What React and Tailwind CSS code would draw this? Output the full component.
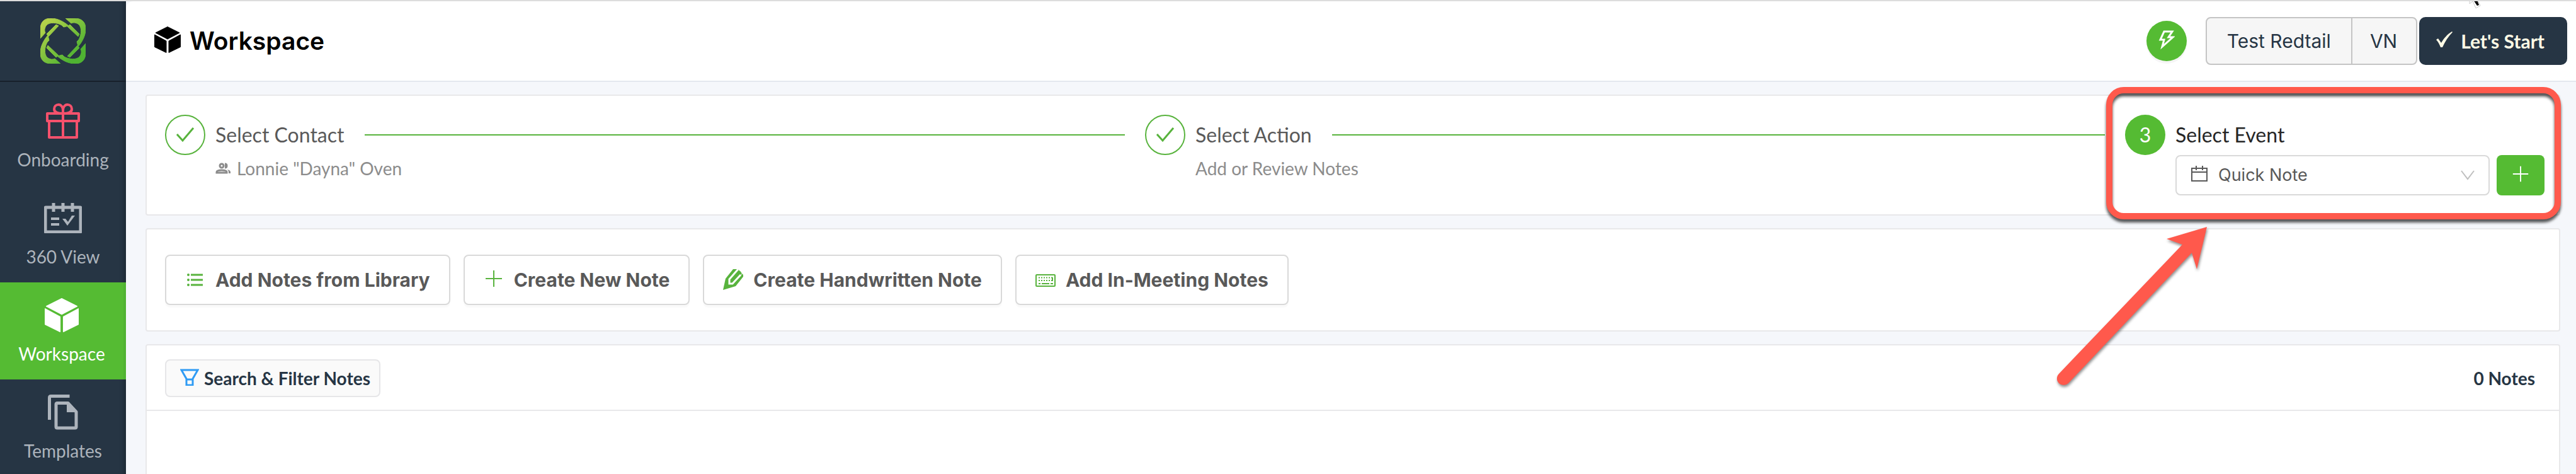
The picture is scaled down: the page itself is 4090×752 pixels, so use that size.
import React from "react";

const navItems = [
  { label: "Onboarding", icon: <GiftIcon /> },
  { label: "360 View", icon: <CalendarCheckIcon /> },
  { label: "Workspace", icon: <CubeIcon className="size-[54px]" />, active: true },
  { label: "Templates", icon: <CopyIcon /> },
];

const noteActions = [
  { label: "Add Notes from Library", icon: <ListIcon /> },
  { label: "Create New Note", icon: <PlusIcon className="size-8 -translate-y-0.5 text-[#58b33d]" /> },
  { label: "Create Handwritten Note", icon: <PencilIcon /> },
  { label: "Add In-Meeting Notes", icon: <KeyboardIcon /> },
];

function LogoIcon() {
  const arm = (
    <>
      <path d="M0 32V18C0 6 6 0 17 0c10 0 20 5 28 12l-8 2-3-3C27 7 14 5 9 12c-2 4-3 7-1 11z" />
      <path d="M43 13l4-3 15 15-2 4z" />
    </>
  );
  return (
    <svg viewBox="0 0 72 72" className="size-[72px]" aria-hidden="true">
      <defs>
        <linearGradient id="logo-fill" x1="0" y1="0" x2="1" y2="1">
          <stop offset="0.1" stopColor="#b4d24a" />
          <stop offset="0.8" stopColor="#4fb332" />
        </linearGradient>
        <mask id="logo-arms">
          <g fill="#fff" stroke="#fff" strokeWidth="1">
            <g>{arm}</g>
            <g transform="rotate(90 36 36)">{arm}</g>
            <g transform="rotate(180 36 36)">{arm}</g>
            <g transform="rotate(270 36 36)">{arm}</g>
          </g>
        </mask>
      </defs>
      <rect width="72" height="72" fill="url(#logo-fill)" mask="url(#logo-arms)" />
    </svg>
  );
}

function GiftIcon() {
  return (
    <svg viewBox="0 0 54 56" className="h-14 w-[54px] text-[#f5516c]" fill="none" stroke="currentColor" strokeWidth="4" strokeLinejoin="round" aria-hidden="true">
      <path d="M2 16h50v12H2zM5 28h44v26H5zM27 16v38" />
      <path d="M27 16c-8 0-14-1-14-7 0-4 3-7 7-7s7 4 7 9zM27 16c8 0 14-1 14-7 0-4-3-7-7-7s-7 4-7 9z" />
    </svg>
  );
}

function CalendarCheckIcon() {
  return (
    <svg viewBox="0 0 60 48" className="h-12 w-[60px]" fill="none" stroke="currentColor" strokeWidth="4" aria-hidden="true">
      <rect x="2" y="7" width="56" height="39" rx="1" strokeWidth="5" />
      <path d="M15 0v14M30 0v14M45 0v14" strokeWidth="5" />
      <path d="M11 25h13M11 34h13" />
      <path d="M29 25h5l4 5 6-10h5L37 36z" fill="currentColor" stroke="none" />
    </svg>
  );
}

function CubeIcon({ className }) {
  return (
    <svg viewBox="0 0 42 42" className={className} fill="currentColor" stroke="currentColor" strokeWidth="1" strokeLinejoin="round" aria-hidden="true">
      <path d="M21 .5L40 10 21 20 2 10z" />
      <path d="M.5 13L19 23v18.500L.5 32.500z" />
      <path d="M41.500 13L23 23v18.500l18.500-9z" />
    </svg>
  );
}

function CopyIcon() {
  return (
    <svg viewBox="0 0 48 56" className="h-14 w-12" fill="none" stroke="currentColor" strokeWidth="5" strokeLinejoin="round" aria-hidden="true">
      <path d="M2.500 40V5q0-2.500 2.500-2.500h29.500" />
      <path d="M15 13.500h17l13 14V51q0 2-2 2H15q-2 0-2-2V15.500q0-2 2-2z" />
      <path d="M30 13v15h15z" fill="currentColor" stroke="none" />
    </svg>
  );
}

function ListIcon() {
  return (
    <svg viewBox="0 0 32 32" className="size-8 text-[#58b33d]" fill="none" stroke="currentColor" strokeWidth="3" aria-hidden="true">
      <path d="M9 8h19M9 16h19M9 24h19" />
      <path d="M5 8h0M5 16h0M5 24h0" strokeWidth="4" strokeLinecap="round" />
    </svg>
  );
}

function PlusIcon({ className }) {
  return (
    <svg viewBox="0 0 32 32" className={className} fill="none" stroke="currentColor" strokeWidth="2" aria-hidden="true">
      <path d="M16 3v26M3 16h26" />
    </svg>
  );
}

function PencilIcon() {
  return (
    <svg viewBox="0 0 32 34" className="h-[34px] w-8" fill="none" strokeWidth="3" aria-hidden="true">
      <path d="M16 0h8l8 9v3L20 27 0 33l4-18z" fill="#58b33d" />
      <path d="M24 0L10 16v7h5L28 9" stroke="#fff" />
      <path d="M28 4L15 18" stroke="#58b33d" strokeWidth="2" />
      <path d="M32 5L17 22" stroke="#fff" strokeWidth="1" />
    </svg>
  );
}

function KeyboardIcon() {
  return (
    <svg viewBox="0 0 32 32" className="size-8 text-[#58b33d]" fill="none" stroke="currentColor" strokeWidth="2" aria-hidden="true">
      <rect x="1" y="8" width="30" height="18" rx="1" />
      <path d="M5 12.500h22M5 17h22" strokeDasharray="2 2" />
      <path d="M5 22h3M10 22h12M24 22h4M27 12v6" />
    </svg>
  );
}

function CheckIcon() {
  return (
    <svg viewBox="0 0 32 32" className="size-8" fill="none" stroke="currentColor" strokeWidth="3" aria-hidden="true">
      <path d="M3 15l9 10L29 5" />
    </svg>
  );
}

function Step({ title, children }) {
  return (
    <li className="flex min-w-0 flex-1 gap-4">
      <span className="flex size-16 shrink-0 items-center justify-center rounded-full border-2 border-[#58b33d] text-[#58b33d]">
        <CheckIcon />
      </span>
      <div className="min-w-0 flex-1">
        <div className="flex items-center gap-8">
          <h2 className="text-[32px] leading-[64px] whitespace-nowrap text-[#595959]">{title}</h2>
          <span className="h-0.5 flex-1 bg-[#58b33d]" />
        </div>
        <p className="flex items-center gap-2 text-[28px] leading-[42px] text-[#8c8c8c]">{children}</p>
      </div>
    </li>
  );
}

function Sidebar() {
  return (
    <aside className="w-[200px] shrink-0 bg-[#263544] shadow-[inset_-8px_0_8px_-6px_rgba(0,0,0,0.3)]">
      <a href="#home" aria-label="Home" className="flex h-32 items-center justify-center border-b-2 border-[#17202b]">
        <LogoIcon />
      </a>
      <nav className="pt-2.5">
        {navItems.map((item) => (
          <a
            key={item.label}
            href={"#" + item.label}
            className={
              item.active
                ? "flex flex-col items-center gap-3 border-r-4 border-[#50b332] bg-[#55bb33] pt-5 pb-6 text-white"
                : "flex flex-col items-center gap-3 pt-5 pb-6 text-[#adb4bc]"
            }
          >
            <span className="flex h-16 items-center">{item.icon}</span>
            <span className="text-[28px] leading-[34px]">{item.label}</span>
          </a>
        ))}
      </nav>
    </aside>
  );
}

function Header() {
  return (
    <header className="flex h-32 shrink-0 items-center justify-between rounded-tl-xl border-b-2 border-[#e4e8ef] bg-white pr-3.5 pl-[45px]">
      <h1 className="flex items-center gap-3.5 font-['Inter',sans-serif] text-[39px] font-semibold text-black">
        <CubeIcon className="size-[42px] -translate-y-0.5" />
        Workspace
      </h1>
      <div className="flex items-center font-['Inter',sans-serif] text-[30px] text-[#263544]">
        <button aria-label="Quick actions" className="mr-[30px] flex size-16 items-center justify-center rounded-full bg-[#55bb33] text-white shadow-[0_4px_0_rgba(0,0,0,0.04)]">
          <svg viewBox="0 0 26 32" className="h-8 w-[26px] -translate-y-0.5" fill="none" stroke="currentColor" strokeWidth="3" aria-hidden="true">
            <path d="M9 3h13l-6 9h7L6 27l3-11H3z" />
          </svg>
        </button>
        <div className="mr-[3px] flex h-[76px] rounded-lg border-2 border-[#c4c4c4] bg-[#f6f6f6]">
          <button className="border-r-2 border-[#c4c4c4] px-8">Test Redtail</button>
          <button className="pr-[30px] pl-7">VN</button>
        </div>
        <button className="flex h-[76px] items-center gap-3 rounded-[10px] bg-[#263544] pr-9 pl-[26px] font-['Lato',sans-serif] font-bold text-[#fffbe6]">
          <svg viewBox="0 0 28 28" className="size-7 -translate-y-0.5" fill="currentColor" aria-hidden="true">
            <path d="M1 14l3-2 5 7C13 12 19 5 26 1l1 1C20 9 15 17 11 26H8C6 21 4 17 1 14z" />
          </svg>
          Let's Start
        </button>
      </div>
    </header>
  );
}

function SelectEventStep() {
  return (
    <li className="relative flex w-[666px] shrink-0 gap-4">
      <span className="flex size-16 shrink-0 items-center justify-center rounded-full bg-[#55bb33] text-[32px] text-white">3</span>
      <div className="flex-1">
        <label htmlFor="event" className="block text-[32px] leading-[64px] text-[#262626]">
          Select Event
        </label>
        <div className="flex gap-[11px]">
          <div className="relative flex-1">
            <select id="event" className="h-16 w-full appearance-none rounded-lg border-2 border-[#d9d9d9] bg-white pl-[66px] font-['Inter',sans-serif] text-[27px] text-[#595959]">
              <option>Quick Note</option>
            </select>
            <svg viewBox="0 0 26 26" className="pointer-events-none absolute top-[17px] left-[25px] size-[26px] text-[#595959]" fill="none" stroke="currentColor" strokeWidth="2" aria-hidden="true">
              <path d="M1 4h24v20H1zM1 10h24M8 0v7M18 0v7" />
            </svg>
            <svg viewBox="0 0 22 16" className="pointer-events-none absolute top-6 right-6 h-4 w-[22px] text-[#bfbfbf]" fill="none" stroke="currentColor" strokeWidth="2" aria-hidden="true">
              <path d="M1 1l10 13L21 1" />
            </svg>
          </div>
          <button aria-label="Add event" className="flex h-16 w-[76px] items-center justify-center rounded-lg bg-[#55bb33] text-white">
            <PlusIcon className="size-[30px] -translate-y-0.5" />
          </button>
        </div>
      </div>
      <div className="pointer-events-none absolute -top-11 -right-[26px] -bottom-[38px] -left-[30px] rounded-[28px] border-10 border-[#ff594c] drop-shadow-[0_5px_2px_rgba(0,0,0,0.65)]" />
      <svg viewBox="0 0 250 270" className="pointer-events-none absolute top-[168px] -left-[109px] h-[270px] w-[250px] drop-shadow-[1px_3px_2px_rgba(0,0,0,0.45)]" fill="#ff594c" aria-hidden="true">
        <path d="M239 10L175 29l25 9L4 243a10 10 0 0 0 15 15L215 51l8 26z" />
      </svg>
    </li>
  );
}

export default function App() {
  return (
    <div className="relative flex h-screen overflow-hidden border-t-2 border-[#dcdcdc] bg-[#f5f7fb] font-['Lato',sans-serif]">
      <Sidebar />
      <div className="flex min-w-0 flex-1 flex-col">
        <Header />
        <main className="flex flex-1 flex-col gap-5 pt-5 pr-[25px] pl-[31px]">
          <ol className="flex gap-8 rounded border-2 border-[#e8e8ea] bg-white py-[30px] pr-[23px] pl-[29px]">
            <Step title="Select Contact">
              <svg viewBox="0 0 26 18" className="h-[18px] w-[26px]" fill="none" stroke="currentColor" strokeWidth="3" aria-hidden="true">
                <circle cx="10" cy="5" r="3" />
                <path d="M2 16v-1q0-3 8-3t8 3v1z" />
                <path d="M15 1a4 4 0 0 1 0 8zM19 11q5 1 5 4v2h-3v-2q0-2-2-4z" fill="currentColor" stroke="none" />
                <path d="M15 2q3 0 3 3t-3 3" />
              </svg>
              Lonnie "Dayna" Oven
            </Step>
            <Step title="Select Action">Add or Review Notes</Step>
            <SelectEventStep />
          </ol>

          <section className="flex gap-[21px] rounded border-2 border-[#e8e8ea] bg-white py-10 pr-[23px] pl-[29px]">
            {noteActions.map((action) => (
              <button
                key={action.label}
                className="flex h-20 items-center gap-4 rounded-lg border-2 border-[#d9d9d9] bg-white px-[30px] font-['Inter',sans-serif] text-[30px] font-bold whitespace-nowrap text-[#595959] shadow-[0_4px_0_rgba(0,0,0,0.02)]"
              >
                {action.icon}
                {action.label}
              </button>
            ))}
          </section>

          <section className="flex-1 rounded-t border-2 border-b-0 border-[#e8e8ea] bg-white">
            <div className="flex items-center justify-between border-b-2 border-[#e8e8ea] pt-[22px] pb-5 pr-[38px] pl-[29px] text-[28px] font-bold text-[#263544]">
              <button className="flex h-[60px] items-center gap-2 rounded-lg border-2 border-[#e6e6e8] bg-[#fafafa] pr-3.5 pl-[22px]">
                <svg viewBox="0 0 30 28" className="h-7 w-[30px] -translate-y-0.5 text-[#2f9bf4]" fill="none" stroke="currentColor" strokeWidth="3" aria-hidden="true">
                  <path d="M2 3h26l-8 14v10h-10V17zM10 18h10" />
                </svg>
                Search &amp; Filter Notes
              </button>
              <span>0 Notes</span>
            </div>
          </section>
        </main>
      </div>
      <svg viewBox="0 0 20 14" className="pointer-events-none absolute -top-0.5 right-[150px] h-3.5 w-5" aria-hidden="true">
        <path d="M1 0v6l5-4 5 11 7-4-4-9z" fill="#fff" stroke="#ccc" strokeWidth="1" />
        <path d="M7 0l6 9 3-1-3-8z" />
      </svg>
    </div>
  );
}
